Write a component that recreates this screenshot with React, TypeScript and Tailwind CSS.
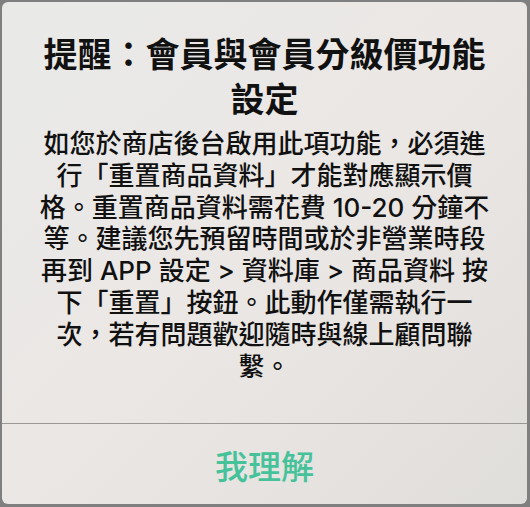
export default function App() {
  const body = [
    '如您於商店後台啟用此項功能，必須進',
    '行「重置商品資料」才能對應顯示價',
    '格。重置商品資料需花費 10-20 分鐘不',
    '等。建議您先預留時間或於非營業時段',
    '再到 APP 設定 > 資料庫 > 商品資料 按',
    '下「重置」按鈕。此動作僅需執行一',
    '次，若有問題歡迎隨時與線上顧問聯',
    '繫。',
  ];

  return (
    <div className="w-[530px] h-[507px] bg-[#7f7f7f] pt-[2px] pl-[2px] pr-[3px] pb-[3px] font-['Inter','Noto_Sans_CJK_TC',sans-serif]">
      <div className="h-full flex flex-col rounded-[6px] overflow-hidden bg-gradient-to-br from-[#e9eae8] via-[#ebe7e5] to-[#e0deda]">
        <div className="flex-1 flex flex-col items-center pt-[30px] text-[#111]">
          <h1 className="text-[34px] leading-[45px] font-bold text-center">
            <div className="whitespace-nowrap">提醒：會員與會員分級價功能</div>
            <div>設定</div>
          </h1>
          <div className="mt-[6px] text-[26px] leading-[31.8px] text-center font-medium">
            {body.map((line) => (
              <div key={line} className="whitespace-nowrap">
                {line}
              </div>
            ))}
          </div>
        </div>
        <div className="border-t border-[#9a9893] h-[81px] flex items-center justify-center">
          <button className="text-[33px] font-medium text-[#45c29a] pt-[8px]">我理解</button>
        </div>
      </div>
    </div>
  );
}
